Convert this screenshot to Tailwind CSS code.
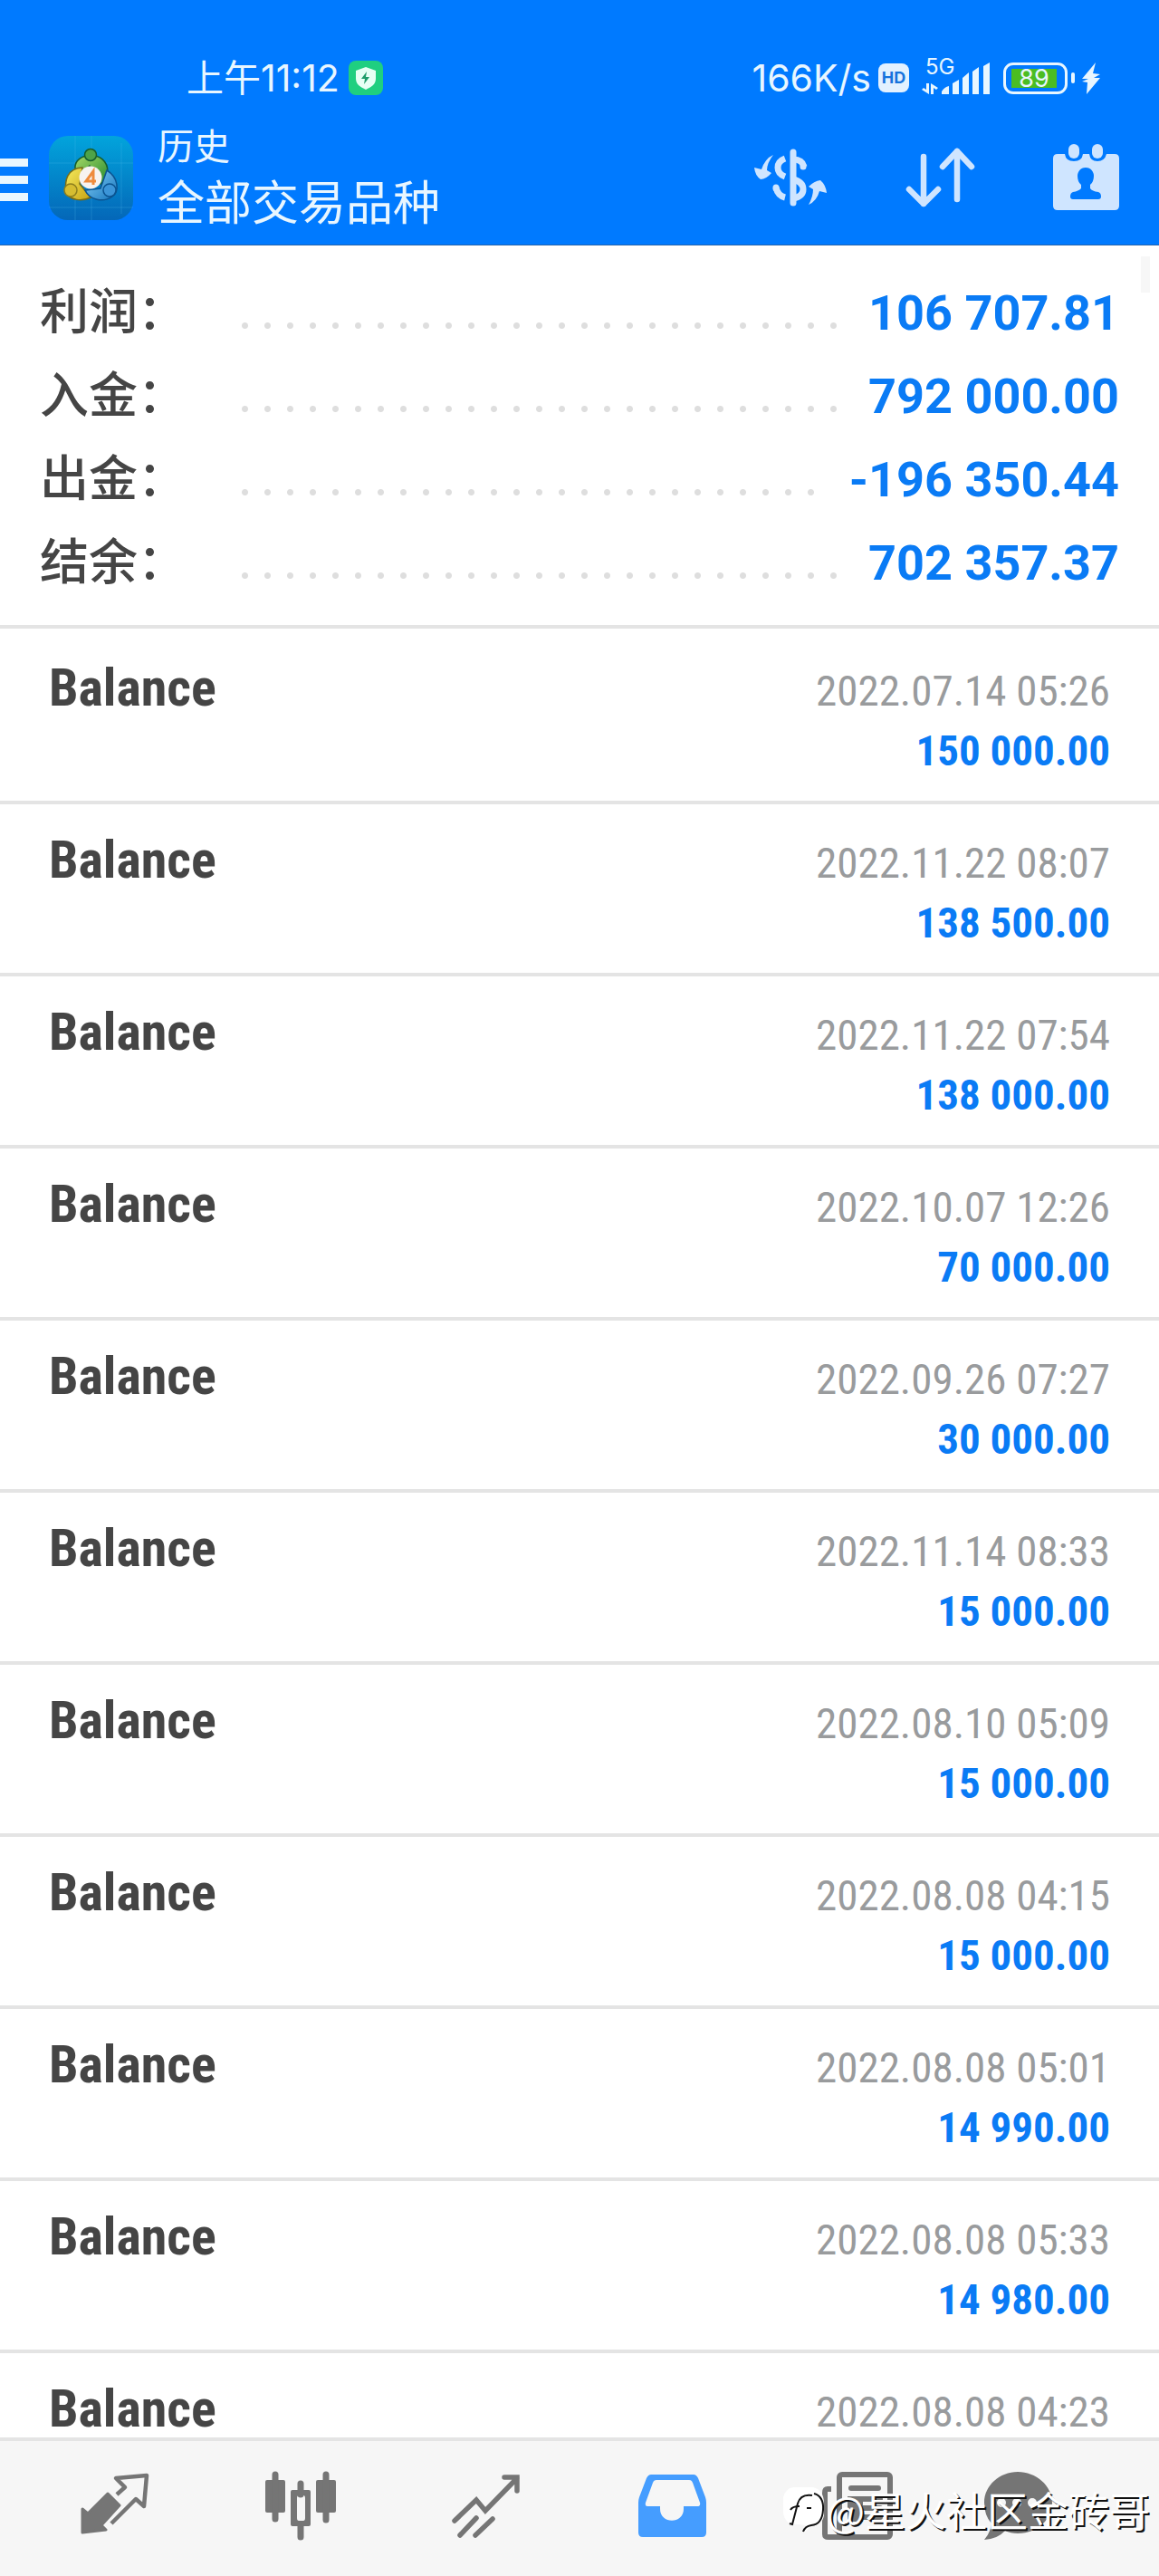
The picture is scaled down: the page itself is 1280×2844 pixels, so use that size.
<!DOCTYPE html>
<html lang="zh-CN">
  <head>
    <meta charset="UTF-8" />
    <meta name="viewport" content="width=device-width, initial-scale=1.0" />
    <title>历史</title>
    <script src="https://cdn.jsdelivr.net/npm/@tailwindcss/browser@4"></script>
  </head>
  <body
    class="flex h-screen flex-col overflow-hidden bg-white font-['Roboto','Noto_Sans_CJK_SC',sans-serif] text-[#454545]"
  >
    <header class="shrink-0 border-b border-[#2464ad] bg-[#007aff] pt-15 text-[#e8f6ff]">
      <!-- Status bar -->
      <div
        class="mb-2.5 flex h-13 items-center justify-between pr-[65px] pl-[206px] font-['Inter','Noto_Sans_CJK_SC',sans-serif] text-[41px] leading-none whitespace-nowrap"
      >
        <div class="flex items-center gap-2.5">
          <span>上午11:12</span>
          <svg class="size-[38px]" viewBox="0 0 38 38">
            <rect width="38" height="38" rx="8" fill="#1fcf80" />
            <path d="M19 7l11 4v9c0 6-5 9-11 12C13 29 8 26 8 20v-9z" fill="#e6fff4" />
            <path d="M20 12l-6 8h4l-1 6 6-8h-4z" fill="#1d9c6a" />
          </svg>
        </div>
        <div class="flex items-center">
          <span>166K/s</span>
          <span
            class="ml-2 flex h-8 w-[34px] items-center justify-center rounded-lg bg-[#e3f1ff] text-[18px] font-bold text-[#1673dd]"
            >HD</span
          >
          <div class="ml-3.5 flex h-10 items-end">
            <div class="relative h-full w-5">
              <span class="absolute -top-1 left-1 text-[24px]">5G</span>
              <svg class="absolute bottom-0.5 left-0 h-3 w-[18px]" viewBox="0 0 18 12" fill="currentColor">
                <path d="M5 0h3v12L0 7l2-2 3 2zM10 12V0l8 5-2 2-3-2v7z" />
              </svg>
            </div>
            <svg class="mb-0.5 ml-0.5 h-[35px] w-[54px]" viewBox="0 0 54 35" fill="currentColor">
              <path d="M0 35v-3q3-5 8-6v9zM12 35V23l7-4v16zM23 35V17l7-6v24zM34 35V10l7-5v30zM46 35V4l7-4v35z" />
            </svg>
          </div>
          <div
            class="ml-3.5 flex h-[35px] w-[71px] items-center rounded-[11px] border-3 border-current px-1.5"
          >
            <span class="flex h-[21px] w-12.5 items-center justify-center bg-[#4bbd22] text-[27px]"
              >89</span
            >
          </div>
          <span class="ml-1 h-3 w-1 rounded-sm bg-current"></span>
          <svg class="ml-2 h-[35px] w-5" viewBox="0 0 20 35" fill="currentColor">
            <path d="M15 0L0 18h7l-7 3 6 1-1 13L20 17h-7l7-4-8-1z" />
          </svg>
        </div>
      </div>

      <!-- App bar -->
      <div class="flex h-[148px] items-center pr-11">
        <button type="button" aria-label="菜单" class="flex w-[31px] flex-col gap-2.5 pt-1">
          <span class="h-[9px] w-full bg-current"></span>
          <span class="h-[9px] w-full bg-current"></span>
          <span class="h-[9px] w-full bg-current"></span>
        </button>
        <svg class="ml-[23px] size-[93px]" viewBox="0 0 93 93">
          <defs>
            <linearGradient id="tile" x1="0" y1="0" x2="0" y2="1">
              <stop offset="0" stop-color="#02a4dc" />
              <stop offset="1" stop-color="#0467b8" />
            </linearGradient>
            <linearGradient id="green" x1="0" y1="0" x2="1" y2="1">
              <stop offset="0" stop-color="#a6d968" />
              <stop offset="1" stop-color="#258a2e" />
            </linearGradient>
            <linearGradient id="yellow" x1="0" y1="0" x2="1" y2="1">
              <stop offset="0" stop-color="#f5ec60" />
              <stop offset="1" stop-color="#c8a313" />
            </linearGradient>
            <linearGradient id="blue" x1="0" y1="0" x2="1" y2="1">
              <stop offset="0" stop-color="#8ad2f8" />
              <stop offset="1" stop-color="#1274bd" />
            </linearGradient>
          </defs>
          <rect width="93" height="93" rx="21" fill="url(#tile)" />
          <path d="M29 0v93M47 0v93M80 8v78M0 30h93M0 79h93" stroke="#5cc4ee" stroke-opacity=".25" fill="none" />
          <g stroke-width="1.5">
            <path d="M29 36C27 18 65 14 65 40v9l-8 4-12-20-12 12z" fill="url(#green)" stroke="#165d2b" />
            <path d="M37 35C20 36 17 49 19 63c5 8 17 10 27 5L34 53z" fill="url(#yellow)" stroke="#776d18" />
            <path d="M64 38c13 8 14 23 6 29-10 7-25 4-30-7l17-2z" fill="url(#blue)" stroke="#0b5390" />
            <circle cx="46" cy="21" r="6.5" fill="#4ea348" stroke="#165d2b" />
            <circle cx="24" cy="60" r="7" fill="#d6bd31" stroke="#8d7f1e" />
            <circle cx="67" cy="60" r="7" fill="#3c95d8" stroke="#0b5390" />
          </g>
          <circle cx="46" cy="46" r="12.5" fill="#f7f3f0" />
          <path d="M49 54V39l-8 11h11" fill="none" stroke="#ee8b3c" stroke-width="3" />
        </svg>
        <div class="ml-[27px] flex-1 pt-1 whitespace-nowrap">
          <p class="text-[40px] leading-[56px]">历史</p>
          <h1 class="text-[52px] leading-[70px]">全部交易品种</h1>
        </div>
        <div class="flex items-center gap-[86px] text-[#cfe5ff]">
          <button type="button" aria-label="货币">
            <svg class="h-16 w-[82px]" viewBox="0 0 82 64" fill="none" stroke="currentColor" stroke-width="7">
              <path d="M44 4v56" stroke-linecap="round" />
              <path d="M35 11q-8 3-8 10t8 10M44 12q10 0 12 8M25 43q2 9 10 11" />
              <path d="M55 20v-1M25 44v-1" stroke-linecap="round" />
              <path d="M44 34q11 3 11 11t-11 10" />
              <path d="M22 7Q13 11 9 23l-8-2q1 9 7 13 6 0 12-7l-5-3q0-8 7-17zM61 62q9-4 12-15l8 2q-1-9-7-14-7 1-13 7l5 3q0 8-5 17z" fill="currentColor" stroke="none" />
            </svg>
          </button>
          <button type="button" aria-label="排序">
            <svg class="h-[67px] w-[77px]" viewBox="0 0 77 67" fill="none" stroke="currentColor" stroke-width="6.5" stroke-linecap="round" stroke-linejoin="round">
              <path d="M20 10v52M4 46l16 16 16-16M57 57V4M41 21L57 4l16 17" />
            </svg>
          </button>
          <button type="button" aria-label="日期">
            <svg class="h-[74px] w-[73px]" viewBox="0 0 73 74" fill="currentColor">
              <rect x="17" y="0" width="12" height="16" rx="6" />
              <rect x="43" y="0" width="12" height="16" rx="6" />
              <path fill-rule="evenodd" d="M5 11h8q1 8 10 8t10-8h7q1 8 9 8t10-8h9q5 0 5 5v52q0 5-5 5H5q-5 0-5-5V16q0-5 5-5zM36 26c-6 0-9 5-9 9q0 7 4 10v4q-3 3-9 4-3 1-3 5 0 3 3 3h28q3 0 3-3 0-4-3-5-7-1-9-4v-4q4-3 4-10c0-4-3-9-9-9z" />
            </svg>
          </button>
        </div>
      </div>
    </header>

    <!-- Totals -->
    <section class="relative shrink-0 border-b-4 border-[#e4e4e4] px-11 pt-7 pb-[23px]">
      <dl id="totals" class="text-[54px] whitespace-nowrap"></dl>
      <div class="absolute top-3 right-[10px] h-10 w-2.5 bg-[#f7f7f7]"></div>
    </section>

    <!-- Deals -->
    <ul id="deals" class="min-h-0 flex-1 overflow-hidden pt-1"></ul>

    <nav
      class="relative grid h-[153px] shrink-0 grid-cols-[205fr_205fr_205fr_205fr_205fr_150fr] items-center border-t-4 border-[#e4e4e4] bg-[#f6f6f6] pr-20 pb-1.5 pl-6 text-[#757575]"
    >
      <a href="#quotes" aria-label="行情" class="flex justify-center">
        <svg class="h-20 w-[78px]" viewBox="9 10 78 80" fill="none" stroke="currentColor" stroke-width="4.5" stroke-linejoin="round">
          <path d="M50 37l9-8-10-10 34-3-3 34-9-8-27 27" />
          <path d="M12 53l6 5 22-22 13 13-20 22 5 5-26 3z" fill="currentColor" stroke-width="3" />
        </svg>
      </a>
      <a href="#chart" aria-label="图表" class="flex justify-center">
        <svg class="h-20 w-[78px]" viewBox="213 7 78 80" fill="currentColor">
          <rect x="213" y="18" width="22" height="36" rx="2" />
          <rect x="269" y="18" width="22" height="36" rx="2" />
          <path d="M224 12v49M280 12v50M252 22v12M252 67v14" stroke="currentColor" stroke-width="7" stroke-linecap="round" />
          <path fill-rule="evenodd" d="M243 29h18q2 0 2 2v36q0 2-2 2h-18q-2 0-2-2V31q0-2 2-2zM250 35q-2 0-2 3v22q0 3 2 3h5q2 0 2-3V38q0-3-2-3z" />
        </svg>
      </a>
      <a href="#trade" aria-label="交易" class="flex justify-center">
        <svg class="h-20 w-[78px]" viewBox="0 -5 78 80" fill="none" stroke="currentColor" stroke-width="5.5" stroke-linecap="round">
          <path d="M4 51l24-23 10 12L73 4M59 3h14v15" />
          <path d="M10 67l18-19M27 67l19-18" />
        </svg>
      </a>
      <a href="#history" aria-label="历史" class="flex justify-center text-[#459dff]">
        <svg class="h-20 w-[78px]" viewBox="-2 -5 78 80" fill="currentColor">
          <path fill-rule="evenodd" d="M14 0h47q3 0 5 4l8 21q1 3 1 6v33q0 5-5 5H5q-5 0-5-5V31q0-3 1-6L9 4q2-4 5-4zM20 6q-3 0-4 3L8 31q-1 4 2 4h14v3c0 17 26 17 26 0v-3h15q4 0 3-4L60 9q-1-3-4-3z" />
        </svg>
      </a>
      <a href="#news" aria-label="新闻" class="flex justify-center">
        <svg class="h-20 w-[78px]" viewBox="0 -2 78 80" fill="none" stroke="currentColor" stroke-width="6">
          <rect x="19" y="3" width="56" height="69" rx="3" />
          <path d="M10 19H6q-3 0-3 4v46q0 3 4 3h15" />
          <path d="M32 18h30M44 30h20M44 40h20M44 50h20" stroke-linecap="round" />
          <path d="M31 30h11v22H31z" fill="currentColor" />
        </svg>
      </a>
      <a href="#chat" aria-label="聊天" class="flex justify-center">
        <svg class="h-20 w-[78px]" viewBox="-1 -2 78 80" fill="currentColor">
          <path d="M37 0c20 0 38 15 38 34S58 68 37 68q-8 0-14-3-8 9-23 10 7-8 8-18Q0 48 0 34C0 15 17 0 37 0z" />
          <g fill="#f6f6f6">
            <circle cx="19" cy="34" r="5" />
            <circle cx="36" cy="34" r="5" />
            <circle cx="53" cy="34" r="5" />
          </g>
        </svg>
      </a>

      <!-- Author mark over the bar -->
      <div
        class="pointer-events-none absolute top-[48px] right-2.5 flex items-center text-[45px] leading-[56px] whitespace-nowrap text-white text-shadow-[2px_2px_0_#111]"
      >
        <svg class="h-[52px] w-12" viewBox="0 0 48 52">
          <path d="M12 1h22q12 3 12 18v13q-2 12-14 12l-8 7 2-8-9-1-9-1Q0 36 1 24V12Q4 2 12 1z" fill="#fff" />
          <path d="M35 8q11 3 10 18-1 16-13 17-7 1-9 7" fill="none" stroke="#111" stroke-width="2" />
          <path d="M33 10q-13-2-16 9l-6 23-3-1M9 26q2-4 10-4M27 24h5" fill="none" stroke="#111" stroke-width="2" />
        </svg>
        <span class="font-['Noto_Sans_CJK_SC',sans-serif]">@星火社区金砖哥</span>
      </div>
    </nav>

    <script>
      const totals = [
        ["利润", "106 707.81"],
        ["入金", "792 000.00"],
        ["出金", "-196 350.44"],
        ["结余", "702 357.37"],
      ];

      const deals = [
        ["2022.07.14 05:26", "150 000.00"],
        ["2022.11.22 08:07", "138 500.00"],
        ["2022.11.22 07:54", "138 000.00"],
        ["2022.10.07 12:26", "70 000.00"],
        ["2022.09.26 07:27", "30 000.00"],
        ["2022.11.14 08:33", "15 000.00"],
        ["2022.08.10 05:09", "15 000.00"],
        ["2022.08.08 04:15", "15 000.00"],
        ["2022.08.08 05:01", "14 990.00"],
        ["2022.08.08 05:33", "14 980.00"],
        ["2022.08.08 04:23", ""],
      ];

      document.getElementById("totals").innerHTML = totals
        .map(
          ([label, value]) => `
          <div class="flex h-[92px] items-center">
            <dt class="w-[214px] font-medium">${label}：</dt>
            <dd class="flex flex-1 items-center">
              <span class="mt-7 h-[25px] flex-1 bg-[radial-gradient(circle,#dedede_3px,transparent_4px)] bg-[length:25px_25px] bg-repeat-x"></span>
              <span class="ml-6 font-bold text-[#0a7bf5]">${value}</span>
            </dd>
          </div>`
        )
        .join("");

      document.getElementById("deals").innerHTML = deals
        .map(
          ([time, amount]) => `
          <li class="flex h-[190px] justify-between border-b-4 border-[#e4e4e4] px-[54px] pt-[30px] font-['Roboto_Condensed','Liberation_Sans_Narrow','Roboto',sans-serif] whitespace-nowrap">
            <h2 class="text-[58px] leading-[62px] font-bold">Balance</h2>
            <div class="space-y-4 pt-2.5 text-right text-[47px] leading-[50px]">
              <p class="text-[#999b9d]">${time}</p>
              <p class="font-bold text-[#0a7bf5]">${amount}</p>
            </div>
          </li>`
        )
        .join("");
    </script>
  </body>
</html>
